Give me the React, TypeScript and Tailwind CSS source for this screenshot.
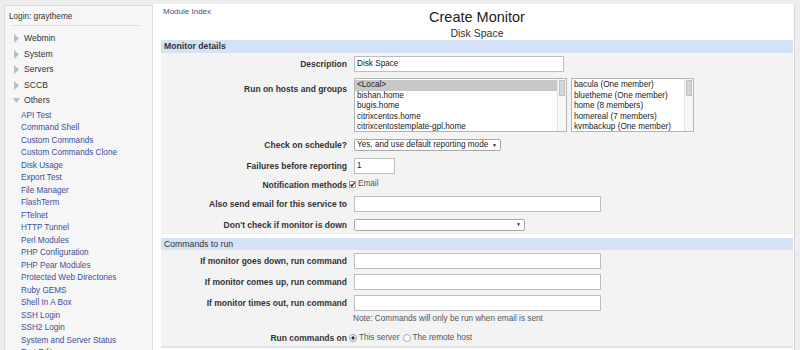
const modules = [
  "API Test",
  "Command Shell",
  "Custom Commands",
  "Custom Commands Clone",
  "Disk Usage",
  "Export Test",
  "File Manager",
  "FlashTerm",
  "FTelnet",
  "HTTP Tunnel",
  "Perl Modules",
  "PHP Configuration",
  "PHP Pear Modules",
  "Protected Web Directories",
  "Ruby GEMS",
  "Shell In A Box",
  "SSH Login",
  "SSH2 Login",
  "System and Server Status",
  "Text Editor",
];

const hosts = ["<Local>", "bishan.home", "bugis.home", "citrixcentos.home", "citrixcentostemplate-gpl.home"];
const groups = ["bacula (One member)", "bluetheme (One member)", "home (8 members)", "homereal (7 members)", "kvmbackup (One member)"];

const Arrow = ({ open }: { open?: boolean }) => (
  <svg width="7" height="9" viewBox="0 0 7 9" className="shrink-0">
    {open ? <polygon points="0,2 7,2 3.5,7" fill="#b8bccb" /> : <polygon points="1,0 6,4.5 1,9" fill="#b8bccb" />}
  </svg>
);

const Category = ({ name, open }: { name: string; open?: boolean }) => (
  <div className="flex items-center gap-[4px] h-[15.5px] pl-[8px] text-[8.6px] text-[#333]">
    <Arrow open={open} />
    <span>{name}</span>
  </div>
);

const Label = ({ children }: { children: React.ReactNode }) => (
  <div className="w-[186px] shrink-0 text-right font-bold text-[8.5px] text-[#333] leading-[10px]">{children}</div>
);

const TextBox = ({ w, value }: { w: string; value?: string }) => (
  <div className={`${w} h-[16px] border border-[#bdbdbd] bg-white px-[2px] leading-[14px] text-[8.2px] text-[#222]`}>{value}</div>
);

const Select = ({ w, value }: { w: string; value?: string }) => (
  <div className={`${w} h-[12px] border border-[#a8a8a8] bg-white rounded-[2px] flex items-center justify-between pl-[2px] pr-[3px] text-[8.2px] text-[#222]`}>
    <span className="leading-[10px] whitespace-nowrap">{value}</span>
    <span className="text-[5px] leading-none">▼</span>
  </div>
);

const ListBox = ({ items, w, selected }: { items: string[]; w: string; selected?: boolean }) => (
  <div className={`${w} h-[54px] border border-[#b5b5b5] bg-white flex`}>
    <div className="flex-1 overflow-hidden pt-[1px]">
      {items.map((it, i) => (
        <div
          key={it}
          className={`h-[10.6px] leading-[10.6px] pl-[2px] text-[8.2px] text-[#222] whitespace-nowrap ${selected && i === 0 ? "bg-[#c8c8c8]" : ""}`}
        >
          {it}
        </div>
      ))}
    </div>
    <div className="w-[9px] border-l border-[#e4e4e4] bg-[#f7f7f7] pt-[1px] px-[1px]">
      <div className="h-[16px] bg-[#d4d4d4] border border-[#c0c0c0]" />
    </div>
  </div>
);

const Row = ({ label, children, h = "h-[20px]" }: { label: string; children: React.ReactNode; h?: string }) => (
  <div className={`flex items-center ${h}`}>
    <Label>{label}</Label>
    <div className="flex items-center ml-[7px]">{children}</div>
  </div>
);

export default function App() {
  return (
    <div className="w-[800px] h-[350px] overflow-hidden bg-[#ededed] flex pt-[4px]" style={{ fontFamily: '"Liberation Sans", Arial, sans-serif' }}>
      <aside className="ml-[4px] w-[149px] shrink-0 h-[360px] mt-[1px] bg-[#f6f6f6] border border-[#dcdcdc] overflow-hidden">
        <div className="pl-[4px] pt-[6px] text-[8.2px] text-[#333] h-[19px] leading-[10px]">Login: graytheme</div>
        <div className="ml-[6px] mr-[11px] border-t border-[#e0e0e0] mb-[5px]" />
        <Category name="Webmin" />
        <Category name="System" />
        <Category name="Servers" />
        <Category name="SCCB" />
        <Category name="Others" open />
        <div className="pl-[16px] pt-[1px]">
          {modules.map((m) => (
            <div key={m} className="h-[12.5px] leading-[12.5px] text-[8.2px] text-[#3a4f98] whitespace-nowrap">
              {m}
            </div>
          ))}
        </div>
      </aside>
      <main className="w-[642px] shrink-0 h-[346px] bg-white border-r border-[#d8d8d8] pl-[8px] overflow-hidden">
        <div className="relative h-[36px]">
          <div className="absolute left-[2px] top-[3px] text-[8px] leading-[10px] text-[#3a4f98]">Module Index</div>
          <div className="w-[632px] text-center text-[14.5px] leading-[16px] text-[#222] pt-[5px]">Create Monitor</div>
          <div className="w-[632px] text-center text-[10.5px] leading-[11px] text-[#333] mt-[3px]">Disk Space</div>
        </div>
        <div className="w-[632px]">
          <div className="h-[13px] bg-[#d4e2f7] pl-[3px] font-bold text-[8.7px] text-[#333] leading-[13px]">Monitor details</div>
          <div className="bg-[#f3f3f3] h-[181px]">
            <Row label="Description" h="h-[21px]">
              <TextBox w="w-[210px]" value="Disk Space" />
            </Row>
            <div className="flex h-[61px] pt-[4px]">
              <div className="pt-[6px]">
                <Label>Run on hosts and groups</Label>
              </div>
              <div className="ml-[7px]">
                <ListBox items={hosts} w="w-[213px]" selected />
              </div>
              <div className="ml-[4px]">
                <ListBox items={groups} w="w-[123px]" />
              </div>
            </div>
            <Row label="Check on schedule?" h="h-[20px]">
              <Select w="w-[147px]" value="Yes, and use default reporting mode" />
            </Row>
            <Row label="Failures before reporting" h="h-[21px]">
              <TextBox w="w-[41px]" value="1" />
            </Row>
            <Row label="Notification methods" h="h-[17px]">
              <div className="flex items-center gap-[2px] -ml-[5px] text-[8.2px] text-[#555]">
                <svg width="7" height="7" viewBox="0 0 7 7">
                  <rect x="0.5" y="0.5" width="6" height="6" fill="white" stroke="#9a9a9a" />
                  <path d="M1.5 3.5 L2.9 5.2 L5.6 1.5" fill="none" stroke="#222" strokeWidth="1.2" />
                </svg>
                <span>Email</span>
              </div>
            </Row>
            <Row label="Also send email for this service to" h="h-[22px]">
              <TextBox w="w-[247px]" />
            </Row>
            <Row label="Don't check if monitor is down" h="h-[19px]">
              <Select w="w-[171px]" />
            </Row>
          </div>
          <div className="h-[4px] bg-white" />
          <div className="h-[12px] bg-[#d4e2f7] pl-[3px] text-[8.7px] text-[#333] leading-[12px]">Commands to run</div>
          <div className="bg-[#f3f3f3] h-[96px]">
            <Row label="If monitor goes down, run command" h="h-[21px]">
              <TextBox w="w-[247px]" />
            </Row>
            <Row label="If monitor comes up, run command" h="h-[21px]">
              <TextBox w="w-[247px]" />
            </Row>
            <Row label="If monitor times out, run command" h="h-[21px]">
              <TextBox w="w-[247px]" />
            </Row>
            <div className="flex items-center h-[12px]">
              <div className="w-[192px] shrink-0" />
              <span className="text-[8.2px] text-[#555]">Note: Commands will only be run when email is sent</span>
            </div>
            <div className="flex items-start h-[21px] pt-[8px]">
              <Label>Run commands on</Label>
              <div className="flex items-center gap-[2px] ml-[2px] text-[8.2px] leading-[10px] text-[#555]">
                <svg width="8" height="8" viewBox="0 0 8 8">
                  <circle cx="4" cy="4" r="3.5" fill="white" stroke="#9a9a9a" />
                  <circle cx="4" cy="4" r="1.7" fill="#333" />
                </svg>
                <span>This server</span>
                <svg width="8" height="8" viewBox="0 0 8 8" className="ml-[1px]">
                  <circle cx="4" cy="4" r="3.5" fill="white" stroke="#a8a8a8" />
                </svg>
                <span>The remote host</span>
              </div>
            </div>
          </div>
          <div className="h-[2px] bg-[#e2e2e2]" />
        </div>
      </main>
    </div>
  );
}
